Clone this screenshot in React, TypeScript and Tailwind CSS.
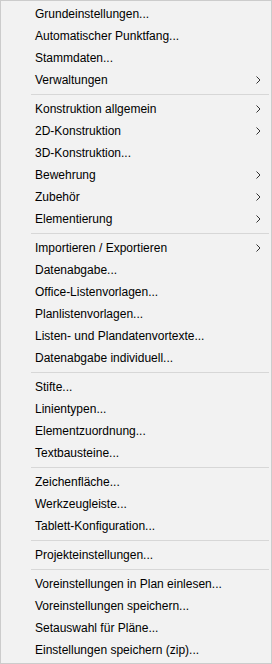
const groups: { label: string; sub?: boolean }[][] = [
  [
    { label: 'Grundeinstellungen...' },
    { label: 'Automatischer Punktfang...' },
    { label: 'Stammdaten...' },
    { label: 'Verwaltungen', sub: true },
  ],
  [
    { label: 'Konstruktion allgemein', sub: true },
    { label: '2D-Konstruktion', sub: true },
    { label: '3D-Konstruktion...' },
    { label: 'Bewehrung', sub: true },
    { label: 'Zubehör', sub: true },
    { label: 'Elementierung', sub: true },
  ],
  [
    { label: 'Importieren / Exportieren', sub: true },
    { label: 'Datenabgabe...' },
    { label: 'Office-Listenvorlagen...' },
    { label: 'Planlistenvorlagen...' },
    { label: 'Listen- und Plandatenvortexte...' },
    { label: 'Datenabgabe individuell...' },
  ],
  [
    { label: 'Stifte...' },
    { label: 'Linientypen...' },
    { label: 'Elementzuordnung...' },
    { label: 'Textbausteine...' },
  ],
  [
    { label: 'Zeichenfläche...' },
    { label: 'Werkzeugleiste...' },
    { label: 'Tablett-Konfiguration...' },
  ],
  [{ label: 'Projekteinstellungen...' }],
  [
    { label: 'Voreinstellungen in Plan einlesen...' },
    { label: 'Voreinstellungen speichern...' },
    { label: 'Setauswahl für Pläne...' },
    { label: 'Einstellungen speichern (zip)...' },
  ],
];

function Chevron() {
  return (
    <svg width="5" height="8" viewBox="0 0 5 8" className="text-[#333333]">
      <path d="M0.5 0.5 L4 4 L0.5 7.5" fill="none" stroke="currentColor" strokeWidth="1" />
    </svg>
  );
}

export default function App() {
  return (
    <div
      className="w-[272px] h-[664px] bg-[#f2f2f2] border border-[#cccccc] py-[2px] text-[12px] text-black"
      style={{ fontFamily: '"Liberation Sans", Arial, sans-serif' }}
    >
      {groups.map((items, gi) => (
        <div key={gi}>
          {gi > 0 && (
            <div className="h-[7px] flex items-center pl-[30px] pr-[2px]">
              <div className="h-px w-full bg-[#d7d7d7]" />
            </div>
          )}
          {items.map((it) => (
            <div key={it.label} className="h-[22px] flex items-center pl-[34px] pr-[10px]">
              <span className="flex-1 whitespace-nowrap">{it.label}</span>
              {it.sub && <Chevron />}
            </div>
          ))}
        </div>
      ))}
    </div>
  );
}
